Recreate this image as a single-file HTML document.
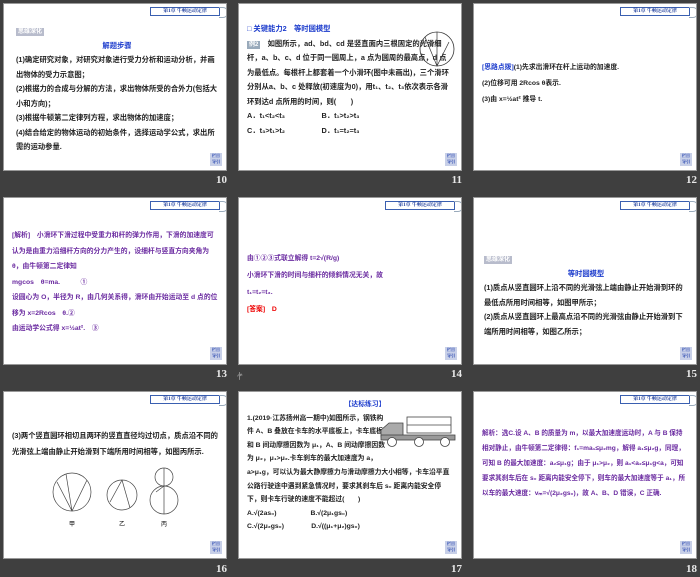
<!DOCTYPE html>
<html><head><meta charset="utf-8"><style>
*{margin:0;padding:0;box-sizing:border-box}
body{width:700px;height:577px;background:#3f3f3f;position:relative;overflow:hidden;font-family:"Liberation Serif","Noto Serif CJK SC","Noto Sans CJK SC",serif}
.s{position:absolute;width:224px;height:168px;background:#fff;border:1px solid #999;overflow:hidden}
.n{position:absolute;color:#e8e8e8;font:bold 11px "Liberation Serif",serif;width:30px;text-align:right}
.tag{position:absolute;left:146px;top:3px;width:70px;height:9px;border:1px solid #3a5fb0;font-size:5px;color:#1a3a9a;text-align:center;line-height:7px;font-weight:bold}
.tag:after{content:"";position:absolute;right:-9px;top:-1px;width:8px;height:9px;border:1px solid #9ab;border-left:none;border-radius:0 5px 5px 0}
.btn{position:absolute;right:4px;bottom:4px;width:12px;height:13px;background:#c8d0e8;color:#1a3aaa;font-size:4px;line-height:6px;text-align:center;font-weight:bold}
.t{position:absolute;left:8px;right:8px;font-size:7.3px;font-weight:bold;line-height:14.5px;color:#222;font-family:"Liberation Sans","Noto Sans CJK SC",sans-serif}
.p{color:#6a2aa0}
.b{color:#1a3acc}
.r{color:#e00}
.hd{display:inline-block;background:#b8bccc;color:#fff;font-size:6px;padding:0 2px;line-height:8px}
.c{text-align:center;color:#1a3acc}
</style></head><body>

<div class="s" style="left:3px;top:3px"><div class="tag">第1章 牛顿运动定律</div>
<div class="t" style="top:20px;left:12px"><span class="hd">思维深化</span><div class="c">解题步骤</div>
(1)确定研究对象，对研究对象进行受力分析和运动分析，并画出物体的受力示意图；<br>(2)根据力的合成与分解的方法，求出物体所受的合外力(包括大小和方向)；<br>(3)根据牛顿第二定律列方程，求出物体的加速度；<br>(4)结合给定的物体运动的初始条件，选择运动学公式，求出所需的运动参量.</div>
<div class="btn">栏目<br>导引</div></div>
<div class="n" style="left:197px;top:174px">10</div>

<div class="s" style="left:238px;top:3px">
<div class="t" style="top:18px"><span class="b">□ 关键能力2　等时圆模型</span><br><span class="hd" style="background:#9ab">例2</span>　如图所示，ad、bd、cd 是竖直面内三根固定的光滑细杆，a、b、c、d 位于同一圆周上，a 点为圆周的最高点，d 点为最低点。每根杆上都套着一个小滑环(图中未画出)，三个滑环分别从a、b、c 处释放(初速度为0)，用t₁、t₂、t₃依次表示各滑环到达d 点所用的时间，则(　　)<br>A．t₁&lt;t₂&lt;t₃　　　　　B．t₁&gt;t₂&gt;t₃<br>C．t₃&gt;t₁&gt;t₂　　　　　D．t₁=t₂=t₃</div>
<svg style="position:absolute;left:178px;top:10px" width="40" height="70"><circle cx="20" cy="35" r="17" fill="none" stroke="#333" stroke-width=".8"/><path d="M20 18L20 52M8 23L20 52M32 28L20 52" stroke="#333" stroke-width=".7"/></svg>
<div class="btn">栏目<br>导引</div></div>
<div class="n" style="left:432px;top:174px">11</div>

<div class="s" style="left:473px;top:3px"><div class="tag">第1章 牛顿运动定律</div>
<div class="t" style="top:56px;font-size:6.8px;line-height:16px"><span class="b">[思路点拨]</span>(1)先求出滑环在杆上运动的加速度.<br>(2)位移可用 2Rcos θ表示.<br>(3)由 x=½at² 推导 t.</div>
<div class="btn">栏目<br>导引</div></div>
<div class="n" style="left:667px;top:174px">12</div>

<div class="s" style="left:3px;top:197px"><div class="tag">第1章 牛顿运动定律</div>
<div class="t p" style="top:30px;font-size:6.8px;line-height:15.5px">[解析]　小滑环下滑过程中受重力和杆的弹力作用，下滑的加速度可认为是由重力沿细杆方向的分力产生的，设细杆与竖直方向夹角为 θ，由牛顿第二定律知<br>mgcos　θ=ma.　　　①<br>设圆心为 O，半径为 R，由几何关系得，滑环由开始运动至 d 点的位移为 x=2Rcos　θ.②<br>由运动学公式得 x=½at².　③</div>
<div class="btn">栏目<br>导引</div></div>
<div class="n" style="left:197px;top:368px">13</div>

<div class="s" style="left:238px;top:197px"><div class="tag">第1章 牛顿运动定律</div>
<div class="t p" style="top:52px;font-size:6.8px;line-height:17px">由①②③式联立解得 t=2√(R/g)<br>小滑环下滑的时间与细杆的倾斜情况无关，故<br>t₁=t₂=t₃.<br><span class="r">[答案]　D</span></div>
<div class="btn">栏目<br>导引</div></div>
<div class="n" style="left:432px;top:368px">14</div>
<div style="position:absolute;left:236px;top:371px;color:#ccc;font-size:8px">㣺</div>

<div class="s" style="left:473px;top:197px"><div class="tag">第1章 牛顿运动定律</div>
<div class="t" style="top:54px;left:10px"><span class="hd">思维深化</span><div class="c">等时圆模型</div>(1)质点从竖直圆环上沿不同的光滑弦上端由静止开始滑到环的最低点所用时间相等，如图甲所示；<br>(2)质点从竖直圆环上最高点沿不同的光滑弦由静止开始滑到下端所用时间相等，如图乙所示；</div>
<div class="btn">栏目<br>导引</div></div>
<div class="n" style="left:667px;top:368px">15</div>

<div class="s" style="left:3px;top:391px"><div class="tag">第1章 牛顿运动定律</div>
<div class="t" style="top:36px;line-height:16px">(3)两个竖直圆环相切且两环的竖直直径均过切点，质点沿不同的光滑弦上端由静止开始滑到下端所用时间相等，如图丙所示.</div>
<svg style="position:absolute;left:48px;top:70px" width="130" height="70" font-size="6" font-family="Liberation Serif">
<g fill="none" stroke="#444" stroke-width=".7"><circle cx="20" cy="30" r="19"/><circle cx="70" cy="33" r="15"/><circle cx="112" cy="15" r="9"/><circle cx="112" cy="38" r="14"/><path d="M20 49L5 20M20 49L14 12M20 49L35 18M70 18L58 40M70 18L78 46M112 6L112 52M104 30L112 24"/></g>
<text x="17" y="64">甲</text><text x="67" y="64">乙</text><text x="109" y="64">丙</text></svg>
<div class="btn">栏目<br>导引</div></div>
<div class="n" style="left:197px;top:563px">16</div>

<div class="s" style="left:238px;top:391px">
<div class="t" style="top:6px;line-height:13.6px;font-size:6.8px"><div class="c" style="margin-left:30px">【达标练习】</div><div style="float:right;width:66px;height:54px"></div>1.(2019·江苏扬州高一期中)如图所示，钢铁构件 A、B 叠放在卡车的水平底板上，卡车底板和 B 间动摩擦因数为 μ₁，A、B 间动摩擦因数为 μ₂，μ₁&gt;μ₂.卡车刹车的最大加速度为 a，a&gt;μ₁g，可以认为最大静摩擦力与滑动摩擦力大小相等，卡车沿平直公路行驶途中遇到紧急情况时，要求其刹车后 s₀ 距离内能安全停下，则卡车行驶的速度不能超过(　　)<br>A.√(2as₀)　　　　　B.√(2μ₁gs₀)<br>C.√(2μ₂gs₀)　　　　D.√((μ₁+μ₂)gs₀)</div>
<svg style="position:absolute;left:140px;top:22px" width="80" height="36"><g fill="none" stroke="#444" stroke-width=".8"><rect x="28" y="3" width="44" height="16"/><line x1="28" y1="11" x2="72" y2="11"/><path d="M2 23L2 16L10 9L24 9L24 23Z" fill="#aaa"/><rect x="2" y="21" width="74" height="5" fill="#999"/><circle cx="13" cy="28" r="4.5" fill="#fff"/><circle cx="40" cy="28" r="4.5" fill="#fff"/><circle cx="66" cy="28" r="4.5" fill="#fff"/></g></svg>
<div class="btn">栏目<br>导引</div></div>
<div class="n" style="left:432px;top:563px">17</div>

<div class="s" style="left:473px;top:391px"><div class="tag">第1章 牛顿运动定律</div>
<div class="t p" style="top:34px;font-size:6.6px;line-height:15px">解析：选C.设 A、B 的质量为 m，以最大加速度运动时，A 与 B 保持相对静止，由牛顿第二定律得：f₁=ma₁≤μ₂mg，解得 a₁≤μ₂g，同理，可知 B 的最大加速度：a₂≤μ₁g；由于 μ₁&gt;μ₂，则 a₁&lt;a₂≤μ₁g&lt;a，可知要求其刹车后在 s₀ 距离内能安全停下，则车的最大加速度等于 a₁，所以车的最大速度：vₘ=√(2μ₂gs₀)，故 A、B、D 错误，C 正确.</div>
<div class="btn">栏目<br>导引</div></div>
<div class="n" style="left:667px;top:563px">18</div>
</body></html>
